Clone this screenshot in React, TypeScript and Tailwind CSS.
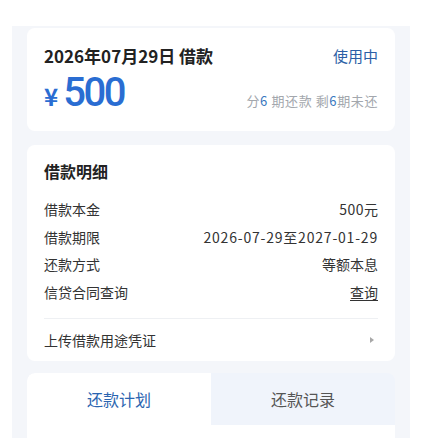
import React from 'react';

const font = { fontFamily: '"Noto Sans CJK SC", "Noto Sans", sans-serif' };

function DetailRow({ label, children }: { label: string; children: React.ReactNode }) {
  return (
    <div className="flex h-[27.6px] items-center justify-between text-[14px] text-[#333]">
      <span>{label}</span>
      <span>{children}</span>
    </div>
  );
}

export default function App() {
  return (
    <div className="min-h-[441px] bg-white pt-[26px]" style={font}>
      <div className="ml-[12px] w-[398px] bg-[#f4f6fa] px-[15px] pt-[2px]">
        {/* Loan summary */}
        <div className="h-[103px] rounded-lg bg-white px-[17px] pt-[18px]">
          <div className="flex h-[20px] items-center justify-between">
            <span className="text-[17px] font-bold text-[#222]">2026年07月29日 借款</span>
            <span className="text-[15px] text-[#2c5fa6]">使用中</span>
          </div>
          <div className="mt-[7px] flex items-baseline justify-between">
            <div className="flex items-baseline text-[#2a6dd2]">
              <span className="mr-[5px] text-[24px] font-bold">¥</span>
              <span
                className="text-[40px] font-medium leading-[40px] tracking-[-2.5px]"
                style={{ fontFamily: 'Roboto, "Noto Sans", sans-serif' }}
              >
                500
              </span>
            </div>
            <span className="text-[13px] tracking-[0.6px] text-[#a3a7ad]">
              分<span className="text-[#3a78c0]">6</span> 期还款 剩<span className="text-[#3a78c0]">6</span>期未还
            </span>
          </div>
        </div>

        {/* Loan detail */}
        <div className="mt-[14px] rounded-lg bg-white px-[17px] pt-[15px]">
          <div className="flex h-[22px] items-center text-[16px] font-bold text-[#222]">借款明细</div>
          <div className="mt-[14px]">
            <DetailRow label="借款本金">
              <span className="tracking-[0.5px]">500</span>元
            </DetailRow>
            <DetailRow label="借款期限">
              <span className="tracking-[0.8px]">2026-07-29至2027-01-29</span>
            </DetailRow>
            <DetailRow label="还款方式">等额本息</DetailRow>
            <DetailRow label="信贷合同查询">
              <span className="underline underline-offset-2">查询</span>
            </DetailRow>
          </div>
          <div className="mt-[12px] h-px bg-[#eef0f3]" />
          <div className="flex h-[42px] items-center justify-between text-[14px] text-[#333]">
            <span>上传借款用途凭证</span>
            <svg width="6" height="8" viewBox="0 0 6 8" className="mr-[3px]">
              <path d="M1 1 L5 4 L1 7 Z" fill="#a8a8a8" />
            </svg>
          </div>
        </div>

        {/* Tabs */}
        <div className="mt-[12px] overflow-hidden rounded-t-lg">
          <div className="flex h-[52px] text-[16px]">
            <div className="flex flex-1 items-center justify-center rounded-tl-lg bg-white text-[#2a64b0]">还款计划</div>
            <div className="flex flex-1 items-center justify-center bg-[#f0f4fb] text-[#555]">还款记录</div>
          </div>
          <div className="h-[13px] bg-white" />
        </div>
      </div>
    </div>
  );
}
